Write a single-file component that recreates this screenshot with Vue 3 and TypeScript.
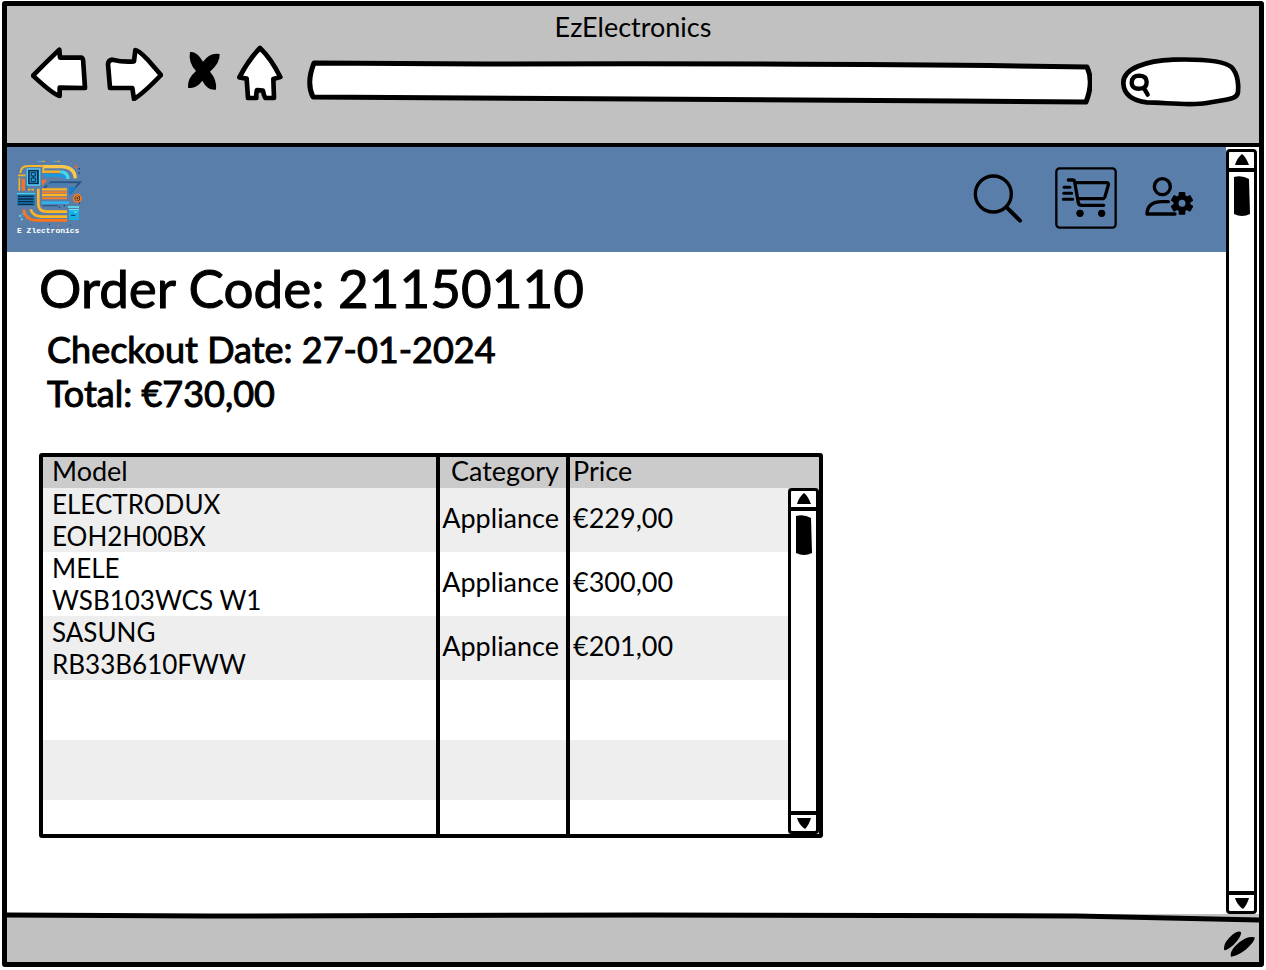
<script setup lang="ts">
import { ref } from 'vue'

interface OrderLine {
  brand: string
  code: string
  category: string
  price: string
}

const address = ref('')
const query = ref('')
const lines: OrderLine[] = [
  { brand: 'ELECTRODUX', code: 'EOH2H00BX', category: 'Appliance', price: '€229,00' },
  { brand: 'MELE', code: 'WSB103WCS W1', category: 'Appliance', price: '€300,00' },
  { brand: 'SASUNG', code: 'RB33B610FWW', category: 'Appliance', price: '€201,00' },
]
const gearTeeth: number[] = [0, 60, 120, 180, 240, 300]
</script>

<template>
  <div class="window">
    <header class="chrome">
      <div class="window-title">EzElectronics</div>
      <div class="toolbar">
        <button class="tool" type="button" aria-label="Back">
          <svg width="58" height="56" viewBox="93 135 174 168">
            <path class="sketch" d="M99 227 Q135 190 178 149 L180 173 L244 173 Q250 174 250 190 L255 264 L179 263 L179 288 Q160 284 99 227Z" />
          </svg>
        </button>
        <button class="tool" type="button" aria-label="Forward">
          <svg width="58" height="56" viewBox="315 135 174 168">
            <path class="sketch" d="M324 192 Q325 181 337 179 Q370 187 402 184 L406 150 Q415 150 442 178 L483 225 Q430 280 402 297 L397 264 L330 264 Q328 240 324 192Z" />
          </svg>
        </button>
        <button class="tool stop" type="button" aria-label="Stop">
          <svg width="34" height="56" viewBox="561 135 102 168">
            <path d="M570 156 Q592 154 609 185 Q630 156 659 162 Q661 188 630 215 Q652 240 648 269 Q622 272 607 242 Q588 268 564 263 Q561 236 588 213 Q564 187 570 156Z" />
          </svg>
        </button>
        <button class="tool" type="button" aria-label="Home">
          <svg width="46" height="56" viewBox="711 135 138 168">
            <path class="sketch" d="M780 144 Q812 174 841 231 L820 237 L822 294 L796 294 Q790 282 789 272 L771 270 Q768 280 769 294 L744 294 L740 236 L718 232 Q745 180 780 144Z" />
          </svg>
        </button>
        <div class="address">
          <svg viewBox="0 0 786 46" preserveAspectRatio="none" aria-hidden="true">
            <path class="outline" d="M8 4 L180 5 Q560 4 781 8 Q788 23 780 43 L650 42 Q300 41 7 38 Q0 24 8 4Z" />
          </svg>
          <input v-model="address" type="text" aria-label="Address" />
        </div>
        <div class="finder">
          <svg width="122" height="52" viewBox="480 168 366 156" aria-hidden="true">
            <path class="sketch" d="M490 250 C488 205 560 182 640 179 C720 177 790 180 815 202 C835 222 836 260 834 276 C832 300 800 297 740 309 C690 318 620 308 560 307 C520 302 492 285 490 250Z" />
            <path class="glass" d="M515 248 Q516 227 538 227 Q560 228 560 246 Q560 265 540 266 Q516 268 515 248Z M551 263 L563 284" />
          </svg>
          <input v-model="query" type="text" aria-label="Web search" />
        </div>
      </div>
    </header>

    <div class="viewport">
      <div class="page">
        <nav class="navbar">
          <a class="logo" href="#">
            <svg width="65" height="66" viewBox="51 57 195 198" aria-hidden="true">
              <g fill="none">
                <path d="M113 61h11 M159 61h10" stroke="#35b6f1" stroke-width="3" />
                <path d="M124 61h11 M170 61h10" stroke="#f5b21d" stroke-width="3" />
                <path d="M61 96 Q62 75 84 75 H130 V96" stroke="#f8b62d" stroke-width="6" />
                <path d="M132 77 H185 Q224 78 226 112" stroke="#f9c74a" stroke-width="10" />
                <path d="M132 92 H180" stroke="#ffb21e" stroke-width="7" />
                <path d="M132 103 H178 Q194 104 195 114" stroke="#169ce0" stroke-width="8" />
                <path d="M181 92 Q204 94 204 114" stroke="#3fdcf8" stroke-width="9" />
                <path d="M54 103h22 M58 110v39 M83 146h8 M94 146h8" stroke="#f6b225" stroke-width="5" />
                <path d="M70 113v36" stroke="#fb711f" stroke-width="10" />
                <path d="M80 107v40" stroke="#2573a9" stroke-width="4" />
                <path d="M126 116h15l-15 19z" fill="#fb711f" />
                <path d="M132 141 L153 124 H240 L210 158" stroke="#265783" stroke-width="6" />
                <path d="M141 131h62" stroke="#477db2" stroke-width="8" />
                <path d="M207 137h24l-24 27z" fill="#1582ce" />
                <path d="M126 145h75 M126 162h75" stroke="#fdb521" stroke-width="7" />
                <path d="M126 154h75 M126 172h75" stroke="#ff7e24" stroke-width="6" />
                <path d="M126 185h81" stroke="#29baf5" stroke-width="7" />
                <path d="M127 194h48" stroke="#245c91" stroke-width="4" />
                <path d="M115 143 V190 Q116 211 140 212 H201" stroke="#fdb521" stroke-width="8" />
                <path d="M92 205 Q98 225 125 227 H201" stroke="#fdb521" stroke-width="8" />
                <path d="M71 205 Q75 236 108 238 H201" stroke="#ff7419" stroke-width="8" />
                <path d="M82 84h37v48H82z" fill="#10547f" stroke="#59c8ed" stroke-width="4" />
                <path d="M87 89h26v38H87z" fill="#2499cf" stroke="#062f52" stroke-width="4" />
                <path d="M94 94h12v11H94z M94 111h12v11H94z M100 105v6" stroke="#062f52" stroke-width="3" />
                <path d="M52 158h53v36H52z" fill="#1b73a9" />
                <path d="M51 158h54" stroke="#45d2f0" stroke-width="4" />
                <path d="M54 166h46 M54 174h46 M54 182h46 M54 190h46" stroke="#082e50" stroke-width="4" />
                <circle cx="232" cy="172" r="11" fill="#352b3c" stroke="#ff7920" stroke-width="5" />
                <path d="M228 167h6l3 5-3 5h-6z" stroke="#ff9b25" stroke-width="3" />
                <circle cx="228" cy="77" r="4" stroke="#e66c30" stroke-width="3" />
                <path d="M204 198h33" stroke="#5ce4f2" stroke-width="5" />
                <path d="M207 205h30v32h-30z" fill="#16afe6" />
                <path d="M207 206h30 M222 213h10" stroke="#75eff8" stroke-width="3" />
                <path d="M213 223h13" stroke="#08355a" stroke-width="3" />
                <path d="M57 225h7 M67 219h3 M63 235h5" stroke="#58e8f3" stroke-width="5" />
                <path d="M238 81v4 M235 96h4 M177 199h3 M191 194h4 M147 250h3 M209 253h3 M237 186h3" stroke="#123f6b" stroke-width="4" />
                <path d="M77 236h3 M89 241h3 M172 254h7 M211 67h3" stroke="#e57931" stroke-width="3" />
              </g>
            </svg>
            <span>E Zlectronics</span>
          </a>
          <div class="actions">
            <button class="action-search" type="button" aria-label="Search">
              <svg width="50" height="50" viewBox="40 517 150 150">
                <g fill="none" stroke="#000" stroke-linecap="round">
                  <circle cx="101" cy="580" r="54" stroke-width="10" />
                  <path d="M141 620 L181 660" stroke-width="12" />
                </g>
              </svg>
            </button>
            <button type="button" aria-label="Cart">
              <svg width="62" height="62" viewBox="285 502 186 186">
                <g fill="none" stroke="#000" stroke-linecap="round" stroke-linejoin="round">
                  <rect x="289" y="506" width="178" height="178" rx="10" stroke-width="7" />
                  <path d="M325 541 H338 Q343 541 344 547 L355 610 Q357 617 365 617 H431 M346 549 H440 Q446 550 445 556 L435 591 Q433 597 426 597 H354" stroke-width="10" />
                  <path d="M312 563h18 M311 581h24 M310 599h28" stroke-width="9" />
                </g>
                <circle cx="360" cy="641" r="11" />
                <circle cx="425" cy="641" r="11" />
              </svg>
            </button>
            <button type="button" aria-label="Account settings">
              <svg width="48" height="48" viewBox="556 521 144 144">
                <g fill="none" stroke="#000">
                  <circle cx="608" cy="559" r="24" stroke-width="10" />
                  <path d="M626 604 H607 Q563 604 562 641 H646" stroke-width="10" stroke-linecap="round" stroke-linejoin="round" />
                  <circle cx="667" cy="609" r="18" stroke-width="15" />
                </g>
                <rect v-for="angle in gearTeeth" :key="angle" x="657" y="575" width="20" height="17" rx="3" :transform="`rotate(${angle} 667 609)`" />
              </svg>
            </button>
          </div>
        </nav>

        <main class="order">
          <h1>Order Code: 21150110</h1>
          <p>Checkout Date: 27-01-2024</p>
          <p>Total: €730,00</p>

          <div class="grid">
            <table>
              <colgroup>
                <col class="col-model" />
                <col class="col-category" />
                <col />
              </colgroup>
              <thead>
                <tr>
                  <th scope="col">Model</th>
                  <th scope="col">Category</th>
                  <th scope="col">Price</th>
                </tr>
              </thead>
              <tbody>
                <tr v-for="line in lines" :key="line.code">
                  <td>{{ line.brand }}<br />{{ line.code }}</td>
                  <td>{{ line.category }}</td>
                  <td>{{ line.price }}</td>
                </tr>
                <tr class="blank"><td></td><td></td><td></td></tr>
                <tr class="blank"><td></td><td></td><td></td></tr>
                <tr class="blank last"><td></td><td></td><td></td></tr>
              </tbody>
            </table>
            <div class="grid-side">
              <div class="scrollbar">
                <button type="button" aria-label="Scroll table up">
                  <svg width="14" height="12" viewBox="0 0 14 12"><path d="M7 0 Q11 3 14 11 H0 Q2 4 7 0Z" /></svg>
                </button>
                <div class="track">
                  <svg width="16" height="42" viewBox="0 0 16 42"><path d="M0 2 Q8 0 15 4 L16 39 Q8 43 0 39Z" /></svg>
                </div>
                <button type="button" aria-label="Scroll table down">
                  <svg width="14" height="12" viewBox="0 0 14 12"><path d="M0 1 H14 Q12 8 8 12 Q2 8 0 1Z" /></svg>
                </button>
              </div>
            </div>
          </div>
        </main>
      </div>

      <div class="scrollbar">
        <button type="button" aria-label="Scroll page up">
          <svg width="14" height="12" viewBox="0 0 14 12"><path d="M7 0 Q11 3 14 11 H0 Q2 4 7 0Z" /></svg>
        </button>
        <div class="track">
          <svg width="16" height="42" viewBox="0 0 16 42"><path d="M0 2 Q8 0 15 4 L16 39 Q8 43 0 39Z" /></svg>
        </div>
        <button type="button" aria-label="Scroll page down">
          <svg width="14" height="12" viewBox="0 0 14 12"><path d="M0 1 H14 Q12 8 8 12 Q2 8 0 1Z" /></svg>
        </button>
      </div>
    </div>

    <footer class="statusbar">
      <svg class="edge" viewBox="0 0 1252 12" preserveAspectRatio="none" aria-hidden="true">
        <path class="fill" d="M0 3 L640 3 L1070 4 L1252 8 V12 H0Z" />
        <path class="stroke" d="M0 3 L200 4 L640 3 L1070 4 L1252 8" />
      </svg>
      <svg class="grip" width="34" height="28" viewBox="188 182 102 84" aria-hidden="true">
        <path d="M192 243 Q186 222 216 196 Q236 182 242 189 Q244 202 220 226 Q202 242 192 243Z M212 262 Q206 245 237 219 Q262 199 283 204 Q285 216 256 241 Q230 260 212 262Z" />
      </svg>
    </footer>
  </div>
</template>

<style>
body {
  margin: 0;
  background: #fff;
}
</style>

<style scoped>
* {
  box-sizing: border-box;
}

.window {
  display: flex;
  flex-direction: column;
  min-height: calc(100vh - 4px);
  margin: 1px 2px 3px;
  border: 5px solid #000;
  border-radius: 3px;
  background: #fff;
  color: #000;
  font-family: Lato, "Liberation Sans", sans-serif;
  font-size: 27px;
  line-height: 32px;
}

button {
  display: flex;
  padding: 0;
  border: 0;
  background: none;
  cursor: pointer;
}

svg {
  display: block;
  flex: none;
}

.chrome {
  min-height: 141px;
  padding-top: 5px;
  border-bottom: 4px solid #000;
  background: #c1c1c1;
}

.window-title {
  text-align: center;
}

.toolbar {
  display: flex;
  align-items: center;
  gap: 16px;
  margin-top: 2px;
  padding: 0 17px 0 24px;
}

.tool {
  padding-bottom: 18px;
}

.stop {
  padding-left: 8px;
}

.sketch {
  fill: #fff;
  stroke: #000;
  stroke-width: 14;
  stroke-linejoin: round;
}

.glass {
  fill: none;
  stroke: #000;
  stroke-width: 13;
  stroke-linecap: round;
}

.address {
  position: relative;
  flex: 1;
  height: 46px;
  margin: 0 12px 0 7px;
}

.address svg {
  position: absolute;
  inset: 0;
  width: 100%;
  height: 100%;
}

.outline {
  fill: #fff;
  stroke: #000;
  stroke-width: 5;
  stroke-linejoin: round;
}

.finder {
  position: relative;
}

.address input,
.finder input {
  position: absolute;
  inset: 8px 12px;
  width: calc(100% - 24px);
  padding: 0;
  border: 0;
  outline: 0;
  background: none;
  font: inherit;
}

.finder input {
  left: 32px;
  width: calc(100% - 44px);
}

.viewport {
  display: flex;
  flex: 1;
}

.page {
  flex: 1;
  min-width: 0;
}

.navbar {
  display: flex;
  align-items: center;
  justify-content: space-between;
  height: 105px;
  padding: 0 33px 4px 10px;
  background: #597eaa;
}

.logo {
  color: #fff;
  font: bold 8px/10px "Liberation Mono", monospace;
  text-decoration: none;
}

.actions {
  display: flex;
  align-items: center;
  gap: 28px;
}

.action-search {
  margin-right: 4px;
}

.order {
  padding: 4px 32px 72px;
}

h1 {
  margin: 0 0 7px;
  font-size: 53px;
  font-weight: 400;
  line-height: 64px;
  -webkit-text-stroke: 1px #000;
}

p {
  margin: 0 0 0 8px;
  font-size: 36px;
  line-height: 44px;
  -webkit-text-stroke: 1px #000;
}

.grid {
  display: flex;
  max-width: 784px;
  margin-top: 38px;
  border: 4px solid #000;
  border-radius: 3px;
}

table {
  flex: 1;
  table-layout: fixed;
  border-spacing: 0;
}

.col-model {
  width: 393px;
}

.col-category {
  width: 130px;
}

th,
td {
  padding: 0 3px 4px 9px;
  text-align: left;
  font-weight: 400;
}

th {
  height: 31px;
  background: #cbcbcb;
  line-height: 26px;
}

td {
  height: 64px;
}

tbody td:first-child {
  padding-top: 0;
  padding-bottom: 0;
  font-size: 26px;
}

th + th,
td + td {
  padding-left: 3px;
  border-left: 4px solid #000;
}

th:nth-child(2),
td:nth-child(2) {
  padding-left: 0;
  padding-right: 7px;
  text-align: right;
}

tbody tr:nth-child(odd) {
  background: #eee;
}

tbody tr:nth-child(even) {
  background: #fff;
}

.blank td {
  height: 60px;
}

.last td {
  height: 34px;
}

tbody tr.last {
  background: #fff;
}

.grid-side {
  display: flex;
  padding-top: 31px;
  background: #cbcbcb;
}

.scrollbar {
  display: flex;
  flex-direction: column;
  width: 31px;
  margin: 2px 2px 0 0;
  border: 3px solid #000;
  border-radius: 4px;
  background: #fff;
}

.grid-side .scrollbar {
  margin: 0;
}

.scrollbar button {
  align-items: center;
  justify-content: center;
  height: 16px;
}

.track {
  display: flex;
  flex: 1;
  justify-content: center;
  padding-top: 3px;
  border: solid #000;
  border-width: 4px 0;
}

.statusbar {
  position: relative;
  display: flex;
  align-items: center;
  justify-content: flex-end;
  height: 48px;
  padding: 12px 2px 0;
  background: #c1c1c1;
}

.edge {
  position: absolute;
  top: -2px;
  left: 0;
  width: 100%;
  height: 12px;
}

.edge .fill {
  fill: #c1c1c1;
}

.edge .stroke {
  fill: none;
  stroke: #000;
  stroke-width: 5;
}
</style>
